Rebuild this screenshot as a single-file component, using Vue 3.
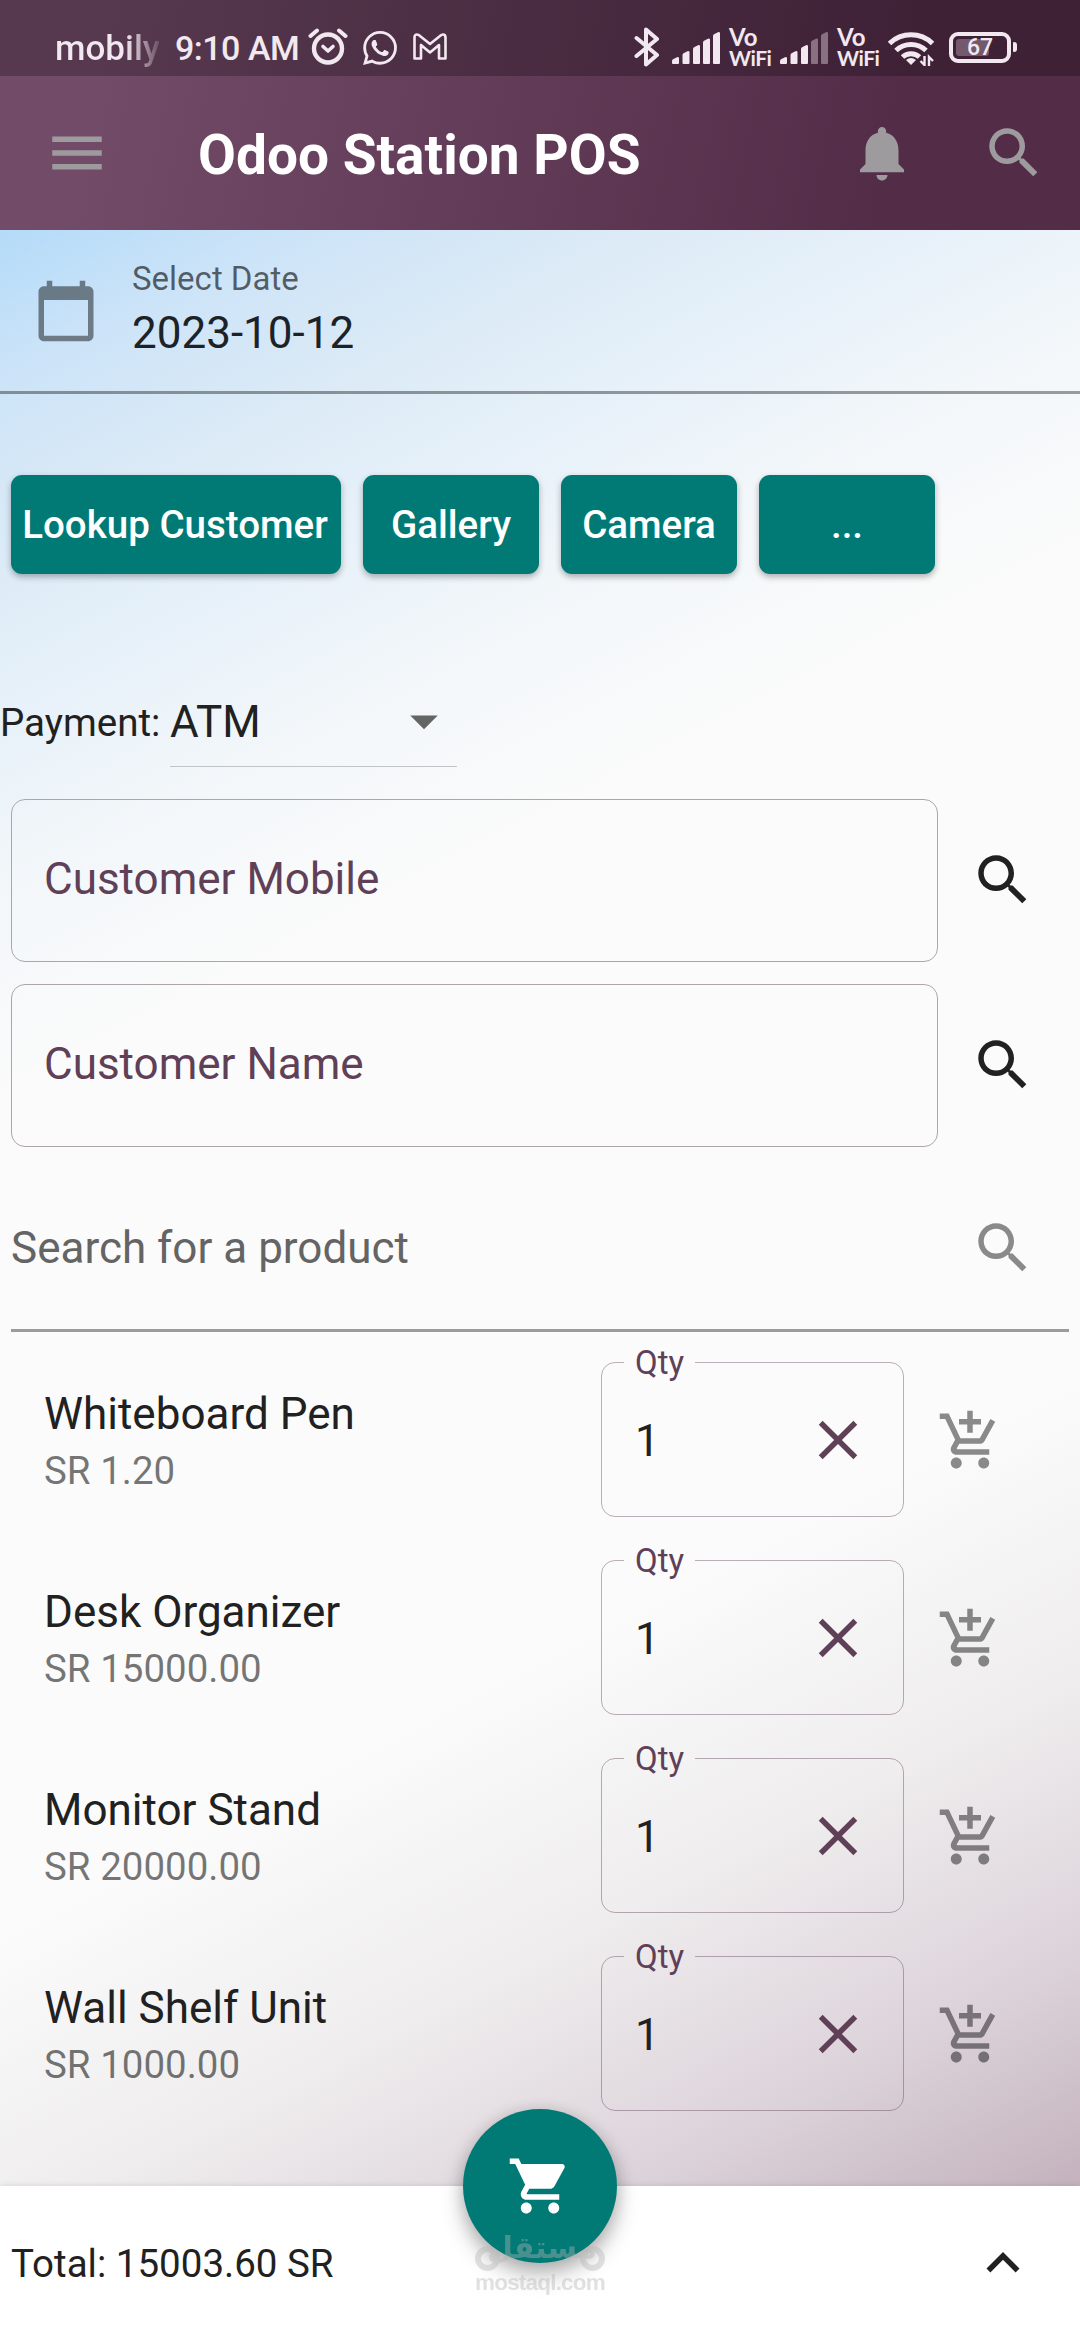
<script setup>
const signals = [
  { id: 1, active: 5 },
  { id: 2, active: 3 },
]
const bars = [
  { x: 0, y: 25, h: 7 },
  { x: 10.5, y: 19, h: 13 },
  { x: 21, y: 13, h: 19 },
  { x: 31, y: 6.5, h: 25.5 },
  { x: 41, y: 0, h: 32 },
]
const actions = ['Lookup Customer', 'Gallery', 'Camera', '...']
const fields = ['Customer Mobile', 'Customer Name']
const products = [
  { name: 'Whiteboard Pen', price: 'SR 1.20', qty: 1 },
  { name: 'Desk Organizer', price: 'SR 15000.00', qty: 1 },
  { name: 'Monitor Stand', price: 'SR 20000.00', qty: 1 },
  { name: 'Wall Shelf Unit', price: 'SR 1000.00', qty: 1 },
]
const searchPath =
  'M15.5 14h-.79l-.28-.27C15.41 12.59 16 11.11 16 9.5 16 5.91 13.09 3 9.5 3S3 5.91 3 9.5 5.91 16 9.5 16c1.61 0 3.09-.59 4.23-1.57l.27.28v.79l5 4.99L20.49 19l-4.99-5zm-6 0C7.01 14 5 11.99 5 9.5S7.01 5 9.5 5 14 7.01 14 9.5 11.99 14 9.5 14z'
</script>

<template>
  <div class="screen">
    <header class="top">
      <div class="status">
        <span class="carrier">mobily</span>
        <span class="clock">9:10 AM</span>
        <svg class="s-alarm" width="40" height="38" viewBox="0 0 40 38" fill="none" stroke="#f2e8f0">
          <circle cx="20" cy="20.5" r="14" stroke-width="4.4" />
          <path d="M15 18.5l5 4.5 5-4.5" stroke-width="3.6" stroke-linecap="round" stroke-linejoin="round" />
          <path d="M2.5 8l6.5-5.5M37.500 8L31 2.500" stroke-width="4" stroke-linecap="round" />
        </svg>
        <svg class="s-wa" width="34" height="34" viewBox="0 0 24 24" fill="#f2e8f0">
          <path d="M17.5 14.4c-.3-.15-1.76-.87-2.03-.97-.27-.1-.47-.15-.67.15-.2.3-.77.97-.94 1.16-.17.2-.35.22-.65.08-.3-.15-1.25-.46-2.39-1.48-.88-.79-1.48-1.76-1.65-2.06-.17-.3-.02-.46.13-.61.14-.13.3-.35.45-.52.15-.17.2-.3.3-.5.1-.2.05-.37-.03-.52-.07-.15-.67-1.61-.91-2.21-.24-.58-.49-.5-.67-.51h-.57c-.2 0-.52.07-.8.37-.27.3-1.04 1.02-1.04 2.48s1.07 2.88 1.21 3.07c.15.2 2.1 3.2 5.08 4.49.71.3 1.26.49 1.69.63.71.22 1.36.19 1.87.12.57-.09 1.76-.72 2-1.41.25-.7.25-1.29.18-1.42-.08-.12-.27-.2-.56-.34M12.050 21.780a9.870 9.870 0 0 1-5.030-1.380l-.36-.21-3.740.980 1-3.650-.240-.370a9.860 9.860 0 0 1-1.510-5.260c0-5.450 4.440-9.880 9.890-9.880a9.820 9.820 0 0 1 6.990 2.900 9.830 9.830 0 0 1 2.890 6.990c0 5.450-4.440 9.880-9.890 9.880m8.410-18.300A11.820 11.820 0 0 0 12.050 0C5.500 0 .16 5.340.160 11.890c0 2.100.550 4.140 1.590 5.950L.060 24l6.300-1.650a11.880 11.880 0 0 0 5.680 1.450c6.560 0 11.890-5.340 11.890-11.890a11.820 11.820 0 0 0-3.480-8.410z" />
        </svg>
        <svg class="s-mail" width="34" height="27" viewBox="0 0 34 27" fill="none" stroke="#f2e8f0" stroke-width="2.6" stroke-linejoin="round">
          <path d="M1.500 4.500q0-3 2.500-3 1.500 0 3 1.500l10 8 10-8q1.500-1.500 3-1.500 2.500 0 2.500 3V25.500h-6.500V12L17 19.500 8 12v13.500H1.500z" />
        </svg>
        <span class="grow"></span>
        <svg class="s-bt" width="26" height="40" viewBox="0 0 26 40" fill="none" stroke="#f2e8f0" stroke-width="4" stroke-linejoin="round" stroke-linecap="round">
          <path d="M2.500 11L23 28 12 37.500V2.500L23 12 2.500 29" />
        </svg>
        <template v-for="s in signals" :key="s.id">
          <svg class="s-sig" width="48" height="32" viewBox="0 0 48 32" fill="#f2e8f0">
            <path
              v-for="(b, i) in bars"
              :key="i"
              :opacity="i < s.active ? 1 : 0.4"
              :d="`M${b.x} ${b.y + 4}q0-1.500 1.500-2l4-2q1.500 0 1.500 1V${b.y + b.h - 1}q0 1-1 1h-5q-1 0-1-1z`"
            />
          </svg>
          <span class="vowifi"><b>Vo</b><i>WiFi</i></span>
        </template>
        <svg class="s-wifi" width="47" height="36" viewBox="0 0 47 36" fill="none" stroke="#f2e8f0" stroke-width="5">
          <path d="M1.500 13.500a31 31 0 0 1 43 0M8 20.500a21.500 21.500 0 0 1 30 0M14.500 27a12.500 12.500 0 0 1 17 0" />
          <path d="M18 30q5-4 10 0l-5 5z" fill="#f2e8f0" stroke="none" />
          <path d="M36.500 26v9l-4-4M41 36v-9l4 4" stroke-width="2.400" />
        </svg>
        <span class="battery"><span class="charge"></span><span class="pct">67</span></span>
        <span class="nub"></span>
      </div>
      <div class="appbar">
        <svg class="icon menu" viewBox="0 0 24 24"><path d="M3 18h18v-2H3v2zm0-5h18v-2H3v2zm0-7v2h18V6H3z" /></svg>
        <h1>Odoo Station POS</h1>
        <svg class="icon" viewBox="0 0 24 24"><path d="M12 22c1.100 0 2-.9 2-2h-4c0 1.100.890 2 2 2zm6-6v-5c0-3.070-1.640-5.640-4.500-6.320V4c0-.83-.67-1.500-1.500-1.500s-1.500.67-1.500 1.500v.68C7.630 5.360 6 7.920 6 11v5l-2 2v1h16v-1l-2-2z" /></svg>
        <svg class="icon" viewBox="0 0 24 24"><path :d="searchPath" /></svg>
      </div>
    </header>

    <main class="content">
      <section class="date">
        <svg class="icon" viewBox="0 0 24 24"><path d="M20 3h-1V1h-2v2H7V1H5v2H4c-1.100 0-2 .9-2 2v16c0 1.100.9 2 2 2h16c1.100 0 2-.9 2-2V5c0-1.100-.9-2-2-2zm0 18H4V8h16v13z" /></svg>
        <div>
          <div class="date-label">Select Date</div>
          <div class="date-value">2023-10-12</div>
        </div>
      </section>

      <section class="actions">
        <button v-for="a in actions" :key="a">{{ a }}</button>
      </section>

      <section class="payment">
        <span class="pay-label">Payment:</span>
        <div class="select">
          <span>ATM</span>
          <svg class="icon" viewBox="0 0 24 24"><path d="M7 10l5 5 5-5z" /></svg>
        </div>
      </section>

      <section class="fields">
        <div v-for="f in fields" :key="f" class="field-row">
          <div class="field">{{ f }}</div>
          <svg class="icon" viewBox="0 0 24 24"><path :d="searchPath" /></svg>
        </div>
      </section>

      <section class="search">
        <span>Search for a product</span>
        <svg class="icon" viewBox="0 0 24 24"><path :d="searchPath" /></svg>
      </section>

      <ul class="products">
        <li v-for="p in products" :key="p.name">
          <div class="info">
            <div class="name">{{ p.name }}</div>
            <div class="price">{{ p.price }}</div>
          </div>
          <fieldset>
            <legend>Qty</legend>
            <div class="qty">
              <span>{{ p.qty }}</span>
              <svg class="icon close" viewBox="0 0 24 24"><path d="M19 6.410L17.590 5 12 10.590 6.410 5 5 6.410 10.590 12 5 17.590 6.410 19 12 13.410 17.590 19 19 17.590 13.410 12z" /></svg>
            </div>
          </fieldset>
          <svg class="icon add" viewBox="0 0 24 24"><path d="M11 9h2V6h3V4h-3V1h-2v3H8v2h3v3zm-4 9c-1.100 0-1.990.9-1.990 2S5.900 22 7 22s2-.9 2-2-.9-2-2-2zm10 0c-1.100 0-1.990.9-1.990 2s.89 2 1.990 2 2-.9 2-2-.9-2-2-2zm-9.830-3.250l.03-.12.9-1.630h7.450c.75 0 1.410-.41 1.750-1.030l3.860-7.010L19.420 4h-.01l-1.100 2-2.760 5H8.530l-.13-.27L6.160 6l-.95-2-.94-2H1v2h2l3.600 7.590-1.350 2.450c-.16.28-.25.61-.25.96 0 1.100.9 2 2 2h12v-2H7.420c-.13 0-.25-.11-.25-.25z" /></svg>
        </li>
      </ul>
    </main>

    <footer class="bottom">
      <span>Total: 15003.60 SR</span>
      <svg class="icon" viewBox="0 0 24 24"><path d="M12 8l-6 6 1.410 1.410L12 10.830l4.590 4.580L18 14z" /></svg>
      <div class="fab">
        <svg class="icon" viewBox="0 0 24 24"><path d="M7 18c-1.100 0-1.990.9-1.990 2S5.900 22 7 22s2-.9 2-2-.9-2-2-2zM1 2v2h2l3.600 7.590-1.350 2.450c-.16.28-.25.61-.25.96 0 1.100.9 2 2 2h12v-2H7.420c-.14 0-.25-.11-.25-.25l.03-.12.9-1.630h7.450c.75 0 1.410-.41 1.750-1.030l3.580-6.490c.08-.14.12-.31.12-.48 0-.55-.45-1-1-1H5.210l-.94-2H1zm16 16c-1.100 0-1.990.9-1.990 2s.89 2 1.990 2 2-.9 2-2-.9-2-2-2z" /></svg>
      </div>
      <div class="mark">
        <span class="ring"></span>
        <span class="mark-ar" lang="ar" dir="rtl">مستقل</span>
        <span class="ring end"></span>
        <span class="mark-en">mostaql.com</span>
      </div>
    </footer>
  </div>
</template>

<style>
body {
  margin: 0;
  background: #fff;
}
</style>

<style scoped>
.screen {
  width: 1080px;
  height: 2340px;
  display: flex;
  flex-direction: column;
  overflow: hidden;
  font-family: Roboto, "Liberation Sans", sans-serif;
  color: #212121;
  background: linear-gradient(152.8deg, #b4dbf9 0%, #cde4f8 6%, #d9e9f6 11%, #e7f1f9 18%, #f3f7fa 25%, #fbfbfb 33%, #fbfbfb 64%, #efedee 75%, #ddd4db 85%, #c4b3be 94%, #b29aa9 100%) 0 230px / 1080px 2110px no-repeat;
}
.icon {
  display: block;
  flex: none;
  width: 66px;
  height: 66px;
  fill: currentColor;
}
.top {
  height: 230px;
  flex: none;
  background: linear-gradient(102deg, #714b67 10%, #532c48 82%);
}
.status {
  display: flex;
  height: 76px;
  box-sizing: border-box;
  padding-right: 63px;
  background: rgba(0, 0, 0, 0.24);
  color: #f2e8f0;
  font-size: 35px;
  font-weight: 500;
  line-height: 41px;
}
.status > * {
  flex: none;
}
.status > .grow {
  flex: 1;
}
.carrier {
  margin: 28px 0 0 55px;
  width: 104px;
  background: linear-gradient(90deg, #f2e8f0 68%, rgba(242, 232, 240, 0.15) 100%);
  background-clip: text;
  -webkit-background-clip: text;
  color: transparent;
}
.clock {
  margin: 28px 0 0 16px;
  width: 125px;
  font-size: 34px;
  letter-spacing: -0.5px;
  white-space: nowrap;
}
.s-alarm { margin: 28px 0 0 8px; }
.s-wa { margin: 31px 0 0 15px; }
.s-mail { margin: 33px 0 0 16px; }
.s-bt { margin: 27px 0 0; }
.s-sig { margin: 32px 0 0 12px; }
.vowifi + .s-sig { margin-left: 9px; }
.vowifi {
  margin: 26px 0 0 9px;
  width: 42px;
  font-family: Lato, sans-serif;
  line-height: 21px;
}
.vowifi b,
.vowifi i {
  display: block;
  font-style: normal;
  font-weight: 700;
  font-size: 24px;
}
.vowifi i {
  font-size: 21px;
  letter-spacing: -0.5px;
}
.s-wifi { margin: 30px 0 0 9px; }
.battery {
  display: flex;
  position: relative;
  box-sizing: border-box;
  width: 62px;
  height: 31px;
  margin: 32px 0 0 14px;
  padding: 3px;
  border: 4px solid #f2e8f0;
  border-radius: 9px;
}
.charge {
  width: 33px;
  height: 17px;
  border-radius: 3px;
  background: #74596d;
}
.pct {
  position: absolute;
  inset: 0;
  text-align: center;
  font-size: 23px;
  line-height: 24px;
}
.nub {
  width: 4px;
  height: 10px;
  margin: 42px 0 0 2px;
  border-radius: 1px 3px 3px 1px;
  background: #f2e8f0;
}
.appbar {
  display: flex;
  align-items: center;
  height: 154px;
  padding: 0 33px 0 44px;
  color: #9e9b9e;
}
.appbar h1 {
  flex: 1;
  margin: 3px 0 0 88px;
  font-size: 55px;
  line-height: 64px;
  font-weight: 700;
  color: #fff;
}
.appbar .icon + .icon {
  margin-left: 66px;
}
.content {
  flex: none;
  height: 1956px;
}
.date {
  display: flex;
  box-sizing: border-box;
  height: 164px;
  padding-left: 33px;
  border-bottom: 3px solid rgba(0, 0, 0, 0.38);
}
.date .icon {
  margin: 48px 33px 0 0;
  color: rgba(0, 0, 0, 0.46);
}
.date-label {
  margin-top: 29px;
  font-size: 33px;
  line-height: 39px;
  color: rgba(0, 0, 0, 0.6);
}
.date-value {
  margin-top: 9px;
  font-size: 44px;
  line-height: 52px;
  color: #1c2328;
}
.actions {
  display: grid;
  grid-template-columns: 330px 176px 176px 176px;
  gap: 22px;
  padding: 81px 0 0 11px;
}
button {
  height: 99px;
  padding: 0;
  border: 0;
  border-radius: 11px;
  background: #017a76;
  color: #fff;
  font: 500 38.500px/44px Roboto, sans-serif;
  white-space: nowrap;
  box-shadow: 0 3px 6px rgba(0, 0, 0, 0.3);
}
button:first-child {
  padding-right: 2px;
}
.payment {
  display: flex;
  margin-top: 114px;
  height: 79px;
}
.pay-label {
  width: 170px;
  margin-top: 12px;
  font-size: 38.500px;
  line-height: 46px;
}
.select {
  display: flex;
  justify-content: space-between;
  width: 287px;
  border-bottom: 1px solid #c1c5c8;
}
.select span {
  margin-top: 8px;
  font-size: 44px;
  line-height: 52px;
}
.select .icon {
  color: #636464;
}
.fields {
  display: flex;
  flex-direction: column;
  gap: 22px;
  margin: 32px 0 0 11px;
}
.field-row {
  display: flex;
  align-items: center;
  gap: 32px;
}
.field-row .icon {
  margin-bottom: 2px;
}
.field {
  width: 927px;
  height: 163px;
  box-sizing: border-box;
  padding-left: 32px;
  border: 1px solid #aea5ab;
  border-radius: 14px;
  font-size: 44px;
  line-height: 159px;
  color: #5f4057;
}
.search {
  display: flex;
  justify-content: space-between;
  box-sizing: border-box;
  height: 185px;
  margin: 0 11px;
  padding: 68px 33px 0 0;
  border-bottom: 3px solid #9c9c9c;
  font-size: 44px;
  line-height: 66px;
  color: #646464;
}
.search .icon {
  color: #8a8a8a;
}
.products {
  margin: 10px 0 0;
  padding: 0;
  list-style: none;
}
.products li {
  display: flex;
  height: 198px;
}
.info {
  width: 557px;
  padding: 46px 0 0 44px;
}
.name {
  font-size: 44px;
  line-height: 52px;
}
.price {
  margin-top: 8px;
  font-size: 38.500px;
  line-height: 46px;
  color: rgba(0, 0, 0, 0.54);
}
.products fieldset {
  min-width: 0;
  width: 303px;
  height: 174px;
  box-sizing: border-box;
  margin: 1px 0 0;
  padding: 0;
  border: 1px solid rgba(95, 64, 87, 0.42);
  border-radius: 14px;
}
legend {
  margin-left: 22px;
  padding: 0 11px;
  width: 49px;
  font-size: 33px;
  line-height: 39px;
  color: #5f4057;
}
.qty {
  display: flex;
  justify-content: space-between;
  align-items: center;
  height: 66px;
  margin-top: 25px;
  padding: 0 32px 0 33px;
  font-size: 44px;
}
.qty span {
  padding-top: 2px;
}
.close {
  color: #5f4057;
}
.add {
  margin: 66px 0 0 33px;
  color: rgba(0, 0, 0, 0.45);
}
.bottom {
  position: relative;
  display: flex;
  justify-content: space-between;
  align-items: center;
  flex: none;
  height: 154px;
  box-sizing: border-box;
  padding: 0 44px 0 11px;
  background: #fff;
  font-size: 38.500px;
  box-shadow: 0 0 6px rgba(0, 0, 0, 0.12);
}
.fab {
  position: absolute;
  left: 463px;
  top: -77px;
  display: grid;
  place-items: center;
  width: 154px;
  height: 154px;
  border-radius: 50%;
  background: #017a76;
  color: #fff;
  box-shadow: 0 12px 22px rgba(0, 0, 0, 0.26), 0 2px 16px rgba(0, 0, 0, 0.14);
}
.mark {
  position: absolute;
  left: 475px;
  top: 40px;
  width: 130px;
  height: 70px;
  color: #b4b4b4;
  opacity: 0.4;
}
.mark-ar {
  position: absolute;
  left: 12px;
  top: 0;
  font: 700 30px/44px "DejaVu Sans", sans-serif;
  white-space: nowrap;
}
.ring {
  position: absolute;
  left: 0;
  top: 20px;
  box-sizing: border-box;
  width: 25px;
  height: 25px;
  border: 6px solid currentColor;
  border-radius: 50%;
}
.ring.end {
  left: 105px;
}
.mark-en {
  position: absolute;
  left: 0;
  top: 44px;
  font: 700 22.500px/26px "Liberation Sans", sans-serif;
  letter-spacing: -0.8px;
  white-space: nowrap;
}
</style>
